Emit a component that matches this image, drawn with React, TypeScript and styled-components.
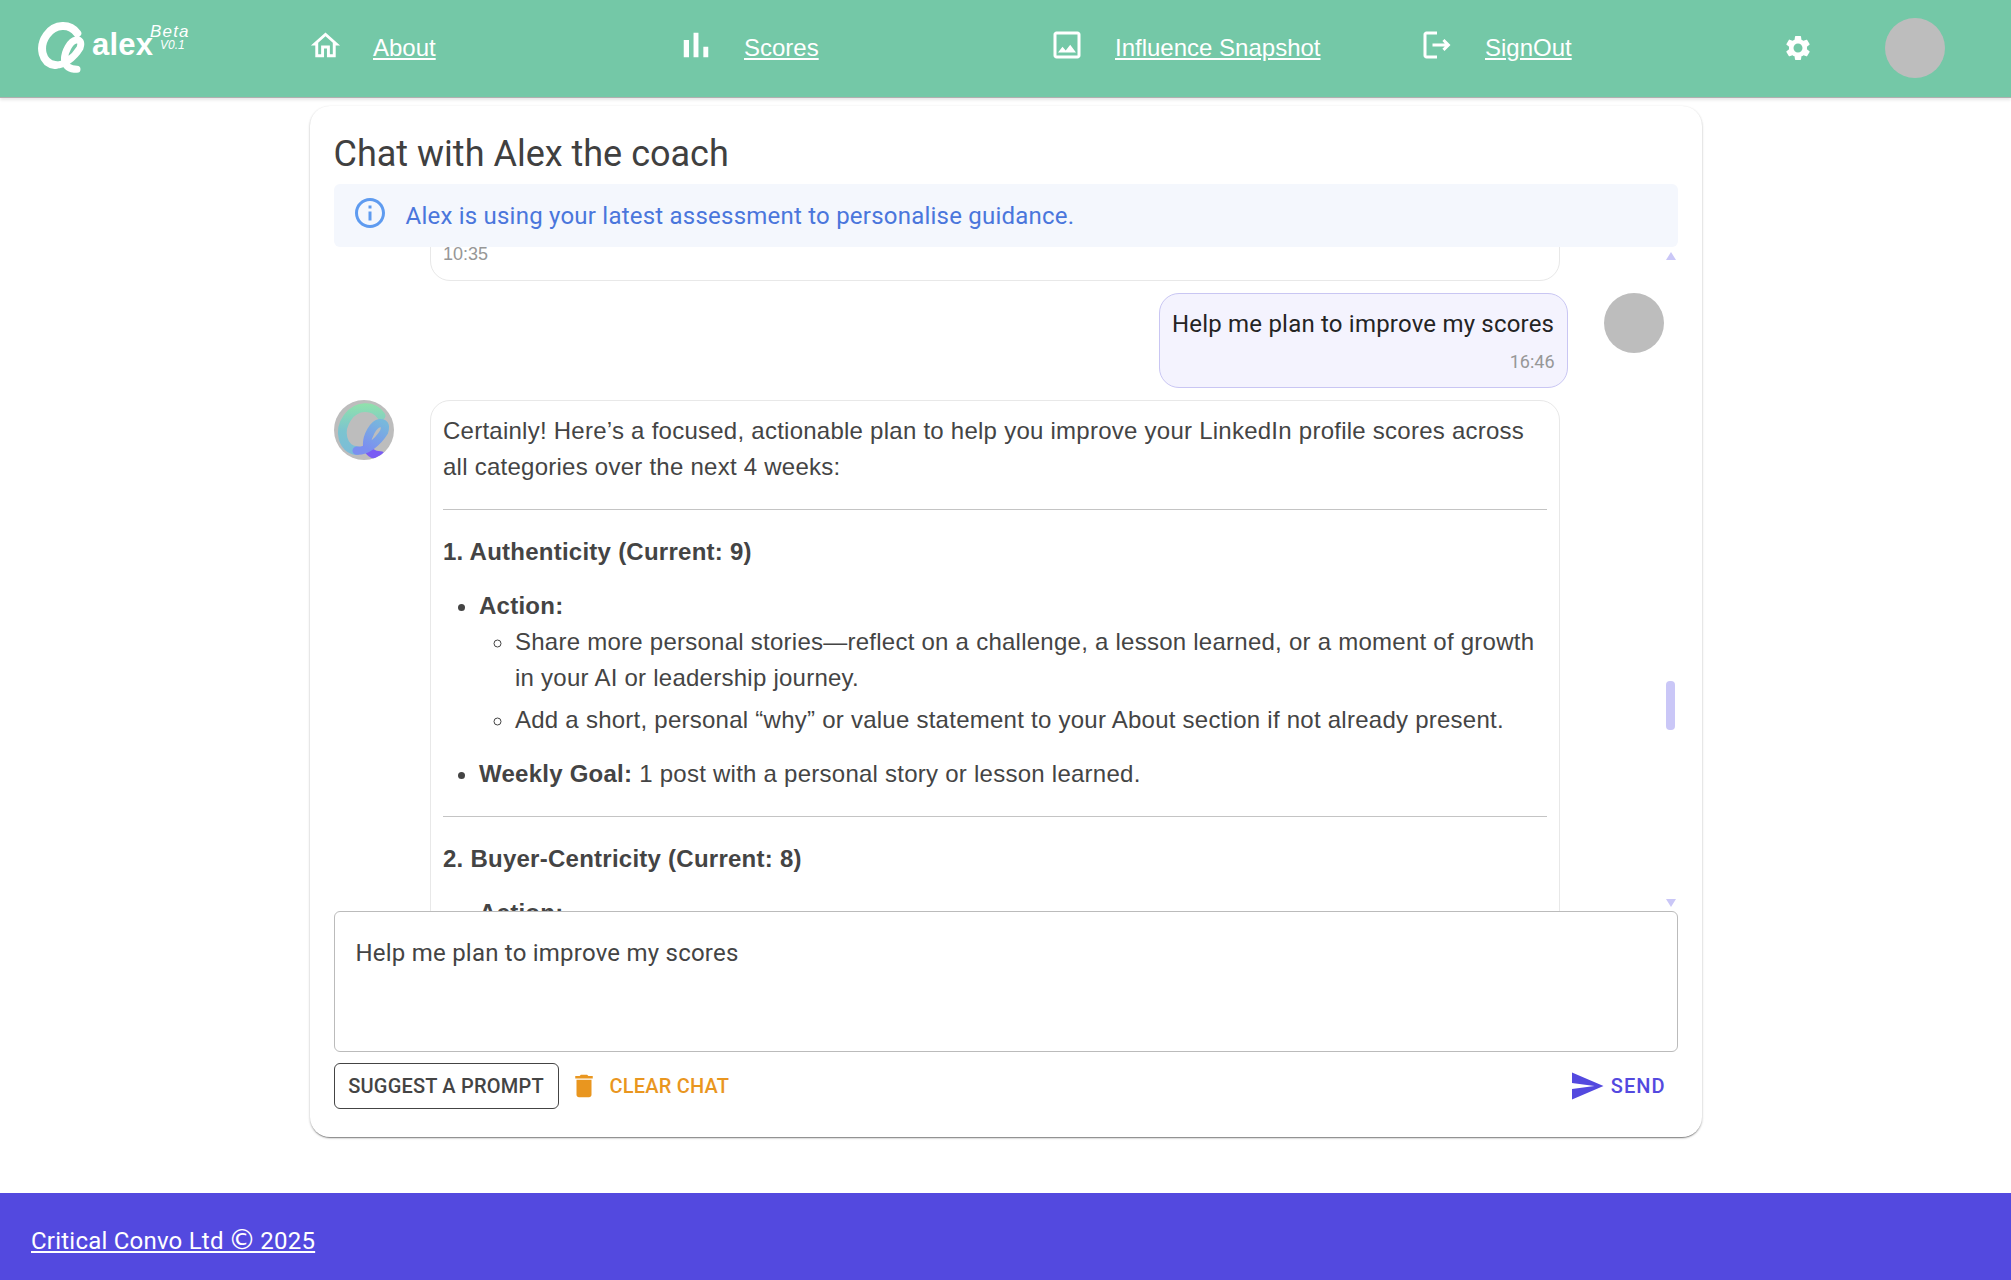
import React from 'react'
import styled, { createGlobalStyle } from 'styled-components'

const paths = {
  home: 'M12 5.69l5 4.5V18h-2v-6H9v6H7v-7.81l5-4.5M12 3L2 12h3v8h6v-6h2v6h6v-8h3L12 3z',
  bars: 'M5 9.2h3V19H5zM10.6 5h2.8v14h-2.8zm5.6 8H19v6h-2.8z',
  image:
    'M19 5v14H5V5h14m0-2H5c-1.1 0-2 .9-2 2v14c0 1.1.9 2 2 2h14c1.1 0 2-.9 2-2V5c0-1.1-.9-2-2-2zm-4.86 8.86l-3 3.87L9 13.14 6 17h12l-3.86-5.14z',
  logout:
    'M17 8l-1.41 1.41L17.17 11H9v2h8.17l-1.58 1.58L17 16l4-4zM5 5h7V3H5c-1.1 0-2 .9-2 2v14c0 1.1.9 2 2 2h7v-2H5V5z',
  gear: 'M19.14 12.94c.04-.3.06-.61.06-.94 0-.32-.02-.64-.07-.94l2.03-1.58c.18-.14.23-.41.12-.61l-1.92-3.32c-.12-.22-.37-.29-.59-.22l-2.39.96c-.5-.38-1.03-.7-1.62-.94l-.36-2.54c-.04-.24-.24-.41-.48-.41h-3.84c-.24 0-.43.17-.47.41l-.36 2.54c-.59.24-1.13.57-1.62.94l-2.39-.96c-.22-.08-.47 0-.59.22L2.74 8.87c-.12.21-.08.47.12.61l2.03 1.58c-.05.3-.09.63-.09.94s.02.64.07.94l-2.03 1.58c-.18.14-.23.41-.12.61l1.92 3.32c.12.22.37.29.59.22l2.39-.96c.5.38 1.03.7 1.62.94l.36 2.54c.05.24.24.41.48.41h3.84c.24 0 .44-.17.47-.41l.36-2.54c.59-.24 1.13-.56 1.62-.94l2.39.96c.22.08.47 0 .59-.22l1.92-3.32c.12-.22.07-.47-.12-.61l-2.01-1.58zM12 15.6c-1.98 0-3.6-1.62-3.6-3.6s1.62-3.6 3.6-3.6 3.6 1.62 3.6 3.6-1.62 3.6-3.6 3.6z',
  info: 'M11 7h2v2h-2zm0 4h2v6h-2zm1-9C6.48 2 2 6.48 2 12s4.48 10 10 10 10-4.48 10-10S17.52 2 12 2zm0 18c-4.41 0-8-3.59-8-8s3.59-8 8-8 8 3.59 8 8-3.59 8-8 8z',
  trash: 'M6 19c0 1.1.9 2 2 2h8c1.1 0 2-.9 2-2V7H6v12zM19 4h-3.5l-1-1h-5l-1 1H5v2h14V4z',
  send: 'M2.01 21 23 12 2.01 3 2 10l15 2-15 2z',
}

// the Q mark is three strokes, so the avatar version can colour them apart
const ringPath = 'M40.3 11.3 C33 1.3 18 1.3 9.7 13 C1.3 24.7 4.7 41.3 18 43'
const loopPath = 'M18 43 C26 44 37 36 43 26 C45 20 43 17.5 39 18 C33 19 27.5 30 27.5 37'
const tailPath = 'M27.5 37 C27.5 44.7 33 47.3 40 47.3'

const GlobalStyle = createGlobalStyle`
  html, body {
    margin: 0;
    padding: 0;
    background: #fff;
  }
  body {
    font-family: Roboto, "Liberation Sans", sans-serif;
    color: #3a3a3a;
  }
  * {
    box-sizing: border-box;
  }
`

const Page = styled.div`
  width: 2011px;
  height: 1280px;
  display: flex;
  flex-direction: column;
  overflow: hidden;
`

const Header = styled.header`
  flex: none;
  height: 98px;
  padding-bottom: 1px;
  background: #74c8a7;
  border-bottom: 1px solid #b0b0b0;
  box-shadow: 0 2px 3px rgba(0, 0, 0, 0.1);
  display: grid;
  grid-template-columns: 295px 371px 371px 370px 372px 106px 60px;
  align-items: center;
`

const LogoBox = styled.div`
  height: 96px;
  padding: 20px 0 0 37px;
`

const NavItem = styled.div`
  display: flex;
  align-items: center;
  gap: 18px;
`

const NavIconBox = styled.span`
  width: 60px;
  height: 48px;
  display: flex;
  align-items: center;
  justify-content: center;
  padding-bottom: 6px;
  color: #fff;
`

const NavLink = styled.a`
  font-family: 'Liberation Sans', Arial, sans-serif;
  font-size: 24px;
  color: #fff;
  text-decoration: underline;
`

const SettingsBox = styled.span`
  display: flex;
  padding-left: 4px;
  color: #fff;
`

const GreyAvatar = styled.div`
  flex: none;
  width: 60px;
  height: 60px;
  border-radius: 50%;
  background: #bdbdbd;
`

const Main = styled.main`
  flex: 1;
  display: flex;
  align-items: flex-start;
  justify-content: center;
  padding: 8px 0 0 0;
`

const Card = styled.section`
  width: 1392px;
  height: 1031px;
  padding: 24px 24px 28px;
  background: #fff;
  border-radius: 20px;
  box-shadow:
    0 2px 1px -1px rgba(0, 0, 0, 0.3),
    0 1px 2px 0 rgba(0, 0, 0, 0.2),
    0 1px 3px 0 rgba(0, 0, 0, 0.12);
  display: flex;
  flex-direction: column;
`

const Title = styled.h1`
  margin: 0 0 6px;
  font-size: 36px;
  line-height: 48px;
  font-weight: 400;
  color: #404040;
`

const Alert = styled.div`
  flex: none;
  height: 63px;
  padding-left: 21px;
  display: flex;
  align-items: center;
  gap: 18px;
  border-radius: 6px;
  background: #f4f7fd;
  color: #4a76dc;
  font-size: 24px;
  letter-spacing: 0.225px;
`

const AlertIcon = styled.span`
  display: flex;
  margin: -6px 0 0 -3px;
  color: #5e9bf0;
`

const ThreadWrap = styled.div`
  position: relative;
  flex: none;
  height: 664px;
`

const Thread = styled.div`
  height: 100%;
  overflow: hidden;
  display: flex;
  flex-direction: column;
  gap: 12px;
`

const Row = styled.div<{ $mine?: boolean; $cut?: boolean }>`
  flex: none;
  display: flex;
  gap: 36px;
  justify-content: ${(p) => (p.$mine ? 'flex-end' : 'flex-start')};
  padding-right: ${(p) => (p.$mine ? '14px' : '0')};
  margin-top: ${(p) => (p.$cut ? '-29px' : '0')};
`

const AvatarSpacer = styled.div`
  flex: none;
  width: 60px;
`

const AlexAvatar = styled.div`
  flex: none;
  width: 60px;
  height: 60px;
  border-radius: 50%;
  background: #bdbdbd;
  overflow: hidden;
`

const Bubble = styled.div<{ $mine?: boolean }>`
  flex: none;
  width: ${(p) => (p.$mine ? '409px' : '1130px')};
  padding: 12px 12px 12px 12.5px;
  border: 1px solid ${(p) => (p.$mine ? '#c9c6f3' : '#e8e8e8')};
  border-radius: 20px;
  background: ${(p) => (p.$mine ? '#f4f3fe' : '#fff')};
  color: ${(p) => (p.$mine ? '#242424' : '#444')};
  font-family: ${(p) => (p.$mine ? 'Roboto' : "'Liberation Sans'")}, sans-serif;
  font-size: 24px;
  line-height: 36px;
  letter-spacing: ${(p) => (p.$mine ? '0.2px' : '0.25px')};
  white-space: ${(p) => (p.$mine ? 'nowrap' : 'normal')};
`

const Time = styled.div<{ $mine?: boolean }>`
  font-size: 18px;
  line-height: 27px;
  letter-spacing: 0;
  margin-top: ${(p) => (p.$mine ? '6px' : '0')};
  color: #979797;
  text-align: ${(p) => (p.$mine ? 'right' : 'left')};
`

const CutBubble = styled(Bubble)`
  padding-top: 22px;
`

const Para = styled.p`
  margin: 0;
`

const Rule = styled.hr`
  margin: 24px 0;
  border: none;
  border-top: 1px solid #c4c4c4;
`

const Heading = styled.div`
  font-weight: 700;
`

const List = styled.ul`
  margin: 18px 0 0;
  padding-left: 36px;
  list-style: disc;
`

const Item = styled.li`
  & + & {
    margin-top: 18px;
  }
`

const SubList = styled.ul`
  margin: 0;
  padding-left: 36px;
  list-style: circle;
`

const SubItem = styled.li`
  & + & {
    margin-top: 6px;
  }
`

const ScrollBar = styled.div`
  position: absolute;
  top: 5px;
  bottom: 4px;
  right: 2px;
  width: 10px;
`

const ScrollArrow = styled.div<{ $down?: boolean }>`
  position: absolute;
  left: 0;
  ${(p) => (p.$down ? 'bottom: 0;' : 'top: 0;')}
  width: 0;
  height: 0;
  border-left: 5px solid transparent;
  border-right: 5px solid transparent;
  ${(p) => (p.$down ? 'border-top: 8px solid #cac7f7;' : 'border-bottom: 8px solid #cac7f7;')}
`

const ScrollThumb = styled.div`
  position: absolute;
  left: 0;
  top: 429px;
  width: 9px;
  height: 49px;
  border-radius: 4px;
  background: #cac7f7;
`

const Input = styled.textarea`
  flex: none;
  display: block;
  width: 100%;
  height: 141px;
  padding: 23px 21px;
  border: 1px solid #bbb;
  border-radius: 6px;
  background: #fff;
  color: #444;
  font-family: Roboto, sans-serif;
  font-size: 24px;
  line-height: 36px;
  letter-spacing: 0.225px;
  resize: none;
  outline: none;
`

const Actions = styled.div`
  flex: none;
  margin-top: 11px;
  height: 46px;
  display: flex;
  align-items: center;
`

const OutlineButton = styled.button`
  width: 225px;
  height: 46px;
  padding: 0;
  border: 1px solid #444;
  border-radius: 6px;
  background: #fff;
  color: #444;
  font-family: Roboto, sans-serif;
  font-size: 20px;
  font-weight: 500;
  letter-spacing: 0.2px;
  text-transform: uppercase;
`

const TextButton = styled.button<{ $color: string; $push?: boolean }>`
  display: flex;
  align-items: center;
  border: none;
  background: none;
  padding: 0;
  color: ${(p) => p.$color};
  font-family: Roboto, sans-serif;
  font-size: 20px;
  font-weight: 500;
  text-transform: uppercase;
  ${(p) =>
    p.$push
      ? 'margin-left: auto; margin-right: 12px; gap: 6px; letter-spacing: 1px;'
      : 'margin-left: 10px; gap: 11px; letter-spacing: 0.2px;'}
`

const Footer = styled.footer`
  flex: none;
  height: 87px;
  padding: 0 31px;
  display: flex;
  align-items: center;
  background: #5349df;
`

const FooterLink = styled.a`
  padding-top: 8px;
  font-family: Roboto, sans-serif;
  font-size: 24px;
  letter-spacing: 0.225px;
  color: #fff;
  text-decoration: underline;
`

const CopyMark = styled.span`
  font-family: 'DejaVu Sans', sans-serif;
  font-size: 28px;
  line-height: 1;
  margin: 0 -2px;
`

const MuiIcon = ({ d, size }: { d: string; size: number }) => (
  <svg width={size} height={size} viewBox="0 0 24 24" fill="currentColor">
    <path d={d} />
  </svg>
)

const Logo = () => (
  <svg width="160" height="56" viewBox="37 20 160 56">
    <g transform="translate(37 22)" fill="none" stroke="#fff" strokeLinecap="round">
      <path d={ringPath} strokeWidth="8" />
      <path d={loopPath} strokeWidth="7" />
      <path d={tailPath} strokeWidth="7" />
    </g>
    <text x="92" y="55" fill="#fff" fontFamily="Liberation Sans" fontWeight="700" fontSize="31" letterSpacing="0.2">
      alex
    </text>
    <text x="150" y="37" fill="#fff" fontFamily="Liberation Sans" fontStyle="italic" fontSize="17" letterSpacing="1.2">
      Beta
    </text>
    <text x="160" y="49" fill="#fff" fontFamily="Liberation Sans" fontStyle="italic" fontSize="12">
      V0.1
    </text>
  </svg>
)

const AlexMark = () => (
  <svg width="60" height="60" viewBox="-2.5 -3 54.5 54.5">
    <defs>
      <linearGradient id="ring" x1="0" y1="0" x2="0" y2="46" gradientUnits="userSpaceOnUse">
        <stop offset="0" stopColor="#90e2ab" />
        <stop offset="0.55" stopColor="#7cc4d0" />
        <stop offset="1" stopColor="#7cbcd8" />
      </linearGradient>
      <linearGradient id="loop" x1="40" y1="16" x2="26" y2="40" gradientUnits="userSpaceOnUse">
        <stop offset="0" stopColor="#78b8dc" />
        <stop offset="1" stopColor="#7b8ff0" />
      </linearGradient>
    </defs>
    <g fill="none" strokeLinecap="round">
      <path d={tailPath} stroke="#7a5cf4" strokeWidth="7.5" />
      <path d={ringPath} stroke="url(#ring)" strokeWidth="8" />
      <path d={loopPath} stroke="url(#loop)" strokeWidth="7.5" />
    </g>
  </svg>
)

const navItems = [
  { icon: paths.home, size: 35, label: 'About' },
  { icon: paths.bars, size: 42, label: 'Scores' },
  { icon: paths.image, size: 36, label: 'Influence Snapshot' },
  { icon: paths.logout, size: 36, label: 'SignOut' },
]

export default function App() {
  return (
    <Page>
      <GlobalStyle />
      <Header>
        <LogoBox>
          <Logo />
        </LogoBox>
        {navItems.map((item) => (
          <NavItem key={item.label}>
            <NavIconBox>
              <MuiIcon d={item.icon} size={item.size} />
            </NavIconBox>
            <NavLink>{item.label}</NavLink>
          </NavItem>
        ))}
        <SettingsBox>
          <MuiIcon d={paths.gear} size={30} />
        </SettingsBox>
        <GreyAvatar />
      </Header>
      <Main>
        <Card>
          <Title>Chat with Alex the coach</Title>
          <Alert>
            <AlertIcon>
              <MuiIcon d={paths.info} size={36} />
            </AlertIcon>
            Alex is using your latest assessment to personalise guidance.
          </Alert>
          <ThreadWrap>
            <Thread>
              <Row $cut>
                <AvatarSpacer />
                <CutBubble>
                  <Time>10:35</Time>
                </CutBubble>
              </Row>
              <Row $mine>
                <Bubble $mine>
                  Help me plan to improve my scores
                  <Time $mine>16:46</Time>
                </Bubble>
                <GreyAvatar />
              </Row>
              <Row>
                <AlexAvatar>
                  <AlexMark />
                </AlexAvatar>
                <Bubble>
                  <Para>
                    Certainly! Here’s a focused, actionable plan to help you improve your LinkedIn profile scores
                    across all categories over the next 4 weeks:
                  </Para>
                  <Rule />
                  <Heading>1. Authenticity (Current: 9)</Heading>
                  <List>
                    <Item>
                      <b>Action:</b>
                      <SubList>
                        <SubItem>
                          Share more personal stories—reflect on a challenge, a lesson learned, or a moment of growth in
                          your AI or leadership journey.
                        </SubItem>
                        <SubItem>
                          Add a short, personal “why” or value statement to your About section if not already present.
                        </SubItem>
                      </SubList>
                    </Item>
                    <Item>
                      <b>Weekly Goal:</b> 1 post with a personal story or lesson learned.
                    </Item>
                  </List>
                  <Rule />
                  <Heading>2. Buyer-Centricity (Current: 8)</Heading>
                  <List>
                    <Item>
                      <b>Action:</b>
                    </Item>
                  </List>
                </Bubble>
              </Row>
            </Thread>
            <ScrollBar>
              <ScrollArrow />
              <ScrollThumb />
              <ScrollArrow $down />
            </ScrollBar>
          </ThreadWrap>
          <Input readOnly defaultValue="Help me plan to improve my scores" />
          <Actions>
            <OutlineButton>Suggest a prompt</OutlineButton>
            <TextButton $color="#e9961f">
              <MuiIcon d={paths.trash} size={30} />
              Clear chat
            </TextButton>
            <TextButton $color="#5349df" $push>
              <MuiIcon d={paths.send} size={36} />
              Send
            </TextButton>
          </Actions>
        </Card>
      </Main>
      <Footer>
        <FooterLink>
          Critical Convo Ltd <CopyMark>©</CopyMark> 2025
        </FooterLink>
      </Footer>
    </Page>
  )
}
